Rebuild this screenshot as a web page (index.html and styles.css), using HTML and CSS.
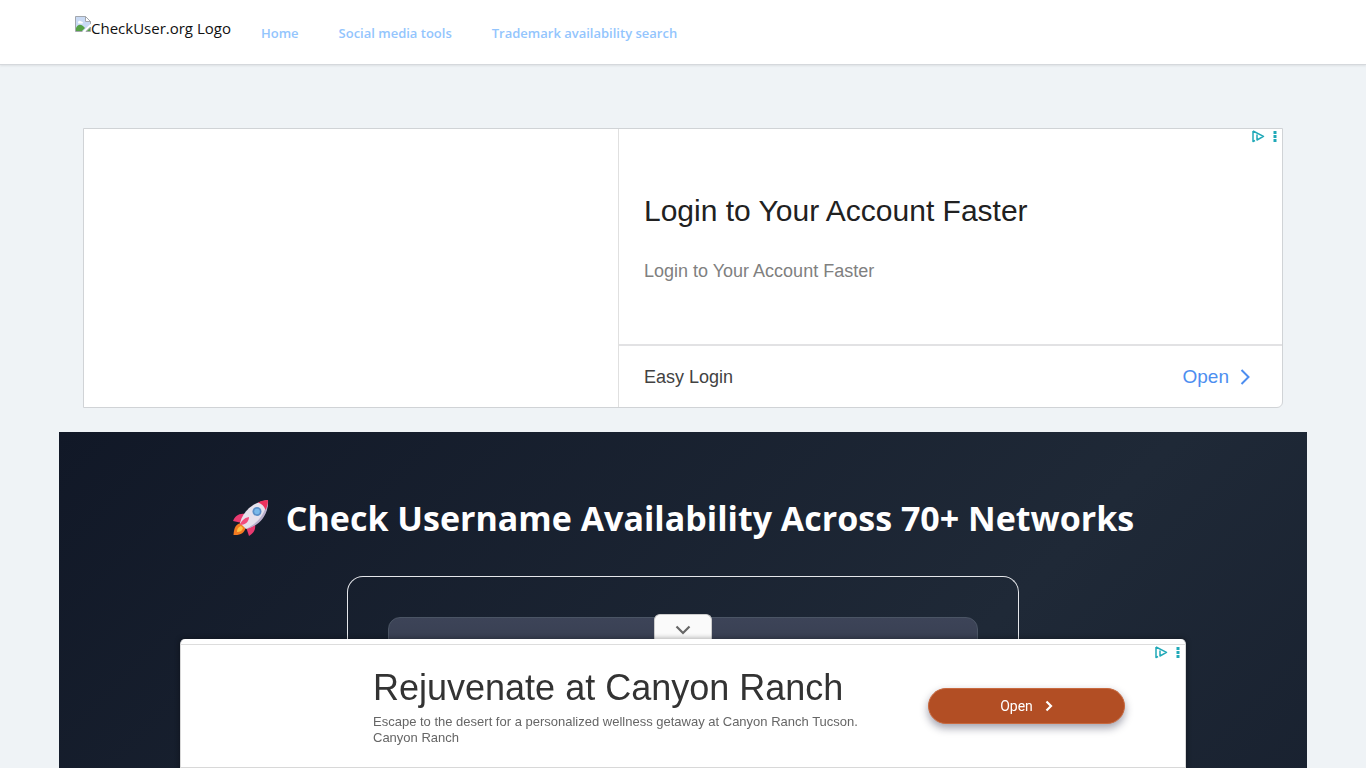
FILE: index.html
```html
<!DOCTYPE html>
<html lang="en">
<head>
<meta charset="utf-8">
<title>CheckUser.org</title>
<link rel="stylesheet" href="styles.css">
</head>
<body>
<header class="site-header">
  <div class="header-inner">
    <a class="logo" href="#">
      <svg width="16" height="16" viewBox="0 0 16 16" aria-hidden="true">
        <path d="M.5.5h10l5 5v4l-6 6h-9z" fill="#c9daf4" stroke="#a3a7ad"/>
        <path d="M10.500.5v5h5z" fill="#fff" stroke="#a3a7ad"/>
        <path d="M3 6.500c0-2 2.500-2.500 3-1 1.500-.5 2.500 1 1.500 2H3.500z" fill="#fff"/>
        <path d="M1 15v-3c2-4 5-4 8-1l1 1-3 3z" fill="#55a245"/>
        <path d="M16 7.500v3L10.500 16H7z" fill="#fff"/>
        <path d="M15.500 11v4.500H11z" fill="#55a245" stroke="#a3a7ad"/>
      </svg><span>CheckUser.org Logo</span>
    </a>
    <nav class="nav">
      <a href="#">Home</a>
      <a href="#">Social media tools</a>
      <a href="#">Trademark availability search</a>
    </nav>
  </div>
</header>

<main class="page">
  <section class="ad" aria-label="Advertisement">
    <div class="ad-media"></div>
    <div class="ad-body">
      <div class="ad-copy">
        <h2 class="ad-title">Login to Your Account Faster</h2>
        <p class="ad-text">Login to Your Account Faster</p>
      </div>
      <div class="ad-footer">
        <span>Easy Login</span>
        <a class="ad-open" href="#">Open
          <svg width="10" height="16" viewBox="0 0 10 16" aria-hidden="true"><path d="M1.500 1l7 7-7 7" fill="none" stroke="#4d8ef0" stroke-width="2"/></svg>
        </a>
      </div>
    </div>
    <div class="ad-choices">
      <svg width="28" height="14" viewBox="0 0 28 14" aria-hidden="true">
        <path d="M2 2v10.500l2-1M2 2l10.500 5.300L6 11V5.500" fill="none" stroke="#20a9b8" stroke-width="1.500" stroke-linejoin="round"/>
        <path d="M22.500 2h3v3h-3zM22.500 6h3v3h-3zM22.500 10h3v3h-3z" fill="#20a9b8"/>
      </svg>
    </div>
  </section>

  <section class="hero">
    <h1 class="hero-title">
      <svg width="38" height="38" viewBox="0 0 38 38" aria-hidden="true">
        <path d="M9 24c-5 1-7 4-7.500 12 7 .5 11-2 12-7z" fill="#f47b20"/>
        <path d="M9 27c-3 1-4 3-4 6 3 0 5-1 6-4z" fill="#ffc444"/>
        <path d="M13 15C7 14 3 17 1 22l9 2zM23 25c1 5-1 9-6 12l-3-9z" fill="#e83a70"/>
        <path d="M8 24C11 12 21 3 36 1c0 14-9 25-22 29z" fill="#e6e1ec"/>
        <path d="M14 30C26 24 33 15 36 1c1 14-8 26-22 29z" fill="#b9afcb"/>
        <path d="M26 3.500C29 2 32 1.200 36 1c0 4-1 7-2.500 10C32 7 30 5 26 3.500z" fill="#ed315d"/>
        <circle cx="25" cy="12.500" r="4.500" fill="#5a8fc8"/>
        <circle cx="25" cy="12.500" r="2.800" fill="#79b9ea"/>
        <path d="M17 18c-5 1-8 4-9 8 5 0 9-3 9-8z" fill="#f34a7b"/>
      </svg>
      <span>Check Username Availability Across 70+ Networks</span>
    </h1>
    <form class="search-card">
      <input class="search-input" type="text" aria-label="Username">
    </form>
  </section>
</main>

<aside class="anchor-ad" aria-label="Advertisement">
  <button class="collapse" type="button" aria-label="Collapse">
    <svg width="16" height="10" viewBox="0 0 16 10" aria-hidden="true"><path d="M1.500 1.500L8 8l6.500-6.500" fill="none" stroke="#666" stroke-width="2.200"/></svg>
  </button>
  <div class="anchor-body">
    <div class="anchor-copy">
      <h2 class="anchor-title">Rejuvenate at Canyon Ranch</h2>
      <p class="anchor-text">Escape to the desert for a personalized wellness getaway at Canyon Ranch Tucson.<br>Canyon Ranch</p>
    </div>
    <button class="anchor-open" type="button">Open
      <svg width="8" height="12" viewBox="0 0 8 12" aria-hidden="true"><path d="M1.500 1.500L6 6l-4.500 4.500" fill="none" stroke="#fff" stroke-width="2.200"/></svg>
    </button>
    <div class="ad-choices">
      <svg width="28" height="14" viewBox="0 0 28 14" aria-hidden="true">
        <path d="M2 2v10.500l2-1M2 2l10.500 5.300L6 11V5.500" fill="none" stroke="#20a9b8" stroke-width="1.500" stroke-linejoin="round"/>
        <path d="M22.500 2h3v3h-3zM22.500 6h3v3h-3zM22.500 10h3v3h-3z" fill="#20a9b8"/>
      </svg>
    </div>
  </div>
</aside>
</body>
</html>
```
FILE: styles.css
```css
* { box-sizing: border-box; }

body {
  margin: 0;
  min-height: 100vh;
  display: flex;
  flex-direction: column;
  background: #eff3f6;
  font-family: "Open Sans", "Noto Sans", sans-serif;
}

h1, h2, p { margin: 0; }
a { text-decoration: none; }
svg { display: block; flex: none; }

.site-header {
  background: #fff;
  border-bottom: 1px solid #d5d8dc;
  box-shadow: 0 1px 2px rgba(0, 0, 0, 0.08);
}

.header-inner {
  width: 100%;
  max-width: 1248px;
  min-height: 64px;
  margin: 0 auto;
  padding: 16px;
  display: flex;
  align-items: flex-start;
  gap: 30px;
}

.logo {
  display: flex;
  color: #111;
  font-size: 15px;
  line-height: 24px;
}

.nav {
  display: flex;
  gap: 40px;
  padding-top: 7px;
  font-size: 13px;
  font-weight: 600;
  line-height: 20px;
}

.nav a { color: #93c5fd; }

.page {
  flex: 1;
  width: 100%;
  max-width: 1248px;
  margin: 0 auto;
  padding-top: 63px;
  display: flex;
  flex-direction: column;
  gap: 24px;
}

.ad {
  position: relative;
  margin: 0 24px;
  min-height: 280px;
  display: grid;
  grid-template-columns: 534fr 664fr;
  background: #fff;
  border: 1px solid #d0d3d6;
  border-bottom-right-radius: 6px;
  font-family: "Liberation Sans", Arial, sans-serif;
}

.ad-body {
  display: flex;
  flex-direction: column;
  border-left: 1px solid #e0e0e0;
}

.ad-copy {
  flex: 1;
  padding: 0 25px;
  display: flex;
  flex-direction: column;
  justify-content: center;
  gap: 32px;
}

.ad-title {
  font-size: 30px;
  font-weight: 400;
  line-height: 36px;
  color: #212121;
}

.ad-text {
  font-size: 18px;
  line-height: 20px;
  color: #808080;
}

.ad-footer {
  min-height: 63px;
  padding: 0 32px 0 25px;
  border-top: 2px solid #e2e2e4;
  display: flex;
  align-items: center;
  justify-content: space-between;
  font-size: 18px;
  line-height: 20px;
  color: #424242;
}

.ad-open {
  display: flex;
  align-items: center;
  gap: 11px;
  font-size: 19px;
  color: #4d8ef0;
}

.ad-choices {
  position: absolute;
  top: 0;
  right: 3px;
}

.hero {
  flex: 1;
  padding: 64px 24px 0;
  display: flex;
  flex-direction: column;
  align-items: center;
  gap: 36px;
  background: linear-gradient(135deg, #111827, #1f2937 50%, #111827) top / 100% 1000px no-repeat #111827;
}

.hero-title {
  display: flex;
  align-items: center;
  gap: 16px;
  font-size: 34px;
  font-weight: 700;
  line-height: 44px;
  color: #fff;
}

.search-card {
  flex: 1;
  width: 100%;
  max-width: 672px;
  padding: 40px;
  border: 1px solid #e5e7eb;
  border-bottom: 0;
  border-radius: 16px 16px 0 0;
}

.search-input {
  width: 100%;
  height: 60px;
  padding: 0 24px;
  border: 1px solid #4b5565;
  border-radius: 12px;
  background: linear-gradient(#3d4458, #323a4a);
  color: #fff;
  font: inherit;
}

.anchor-ad {
  position: fixed;
  bottom: 0;
  left: 0;
  right: 0;
  width: calc(100% - 32px);
  max-width: 1006px;
  margin: 0 auto;
  display: flex;
  flex-direction: column;
  align-items: center;
}

.collapse {
  width: 58px;
  height: 25px;
  padding: 5px 0 0;
  display: flex;
  align-items: center;
  justify-content: center;
  border: 1px solid #ccc;
  border-bottom: 0;
  border-radius: 6px 6px 0 0;
  background: #fafafa;
}

.anchor-body {
  position: relative;
  width: 100%;
  min-height: 129px;
  padding: 6px 60px 0 192px;
  display: flex;
  align-items: center;
  justify-content: space-between;
  gap: 24px;
  background: linear-gradient(#fff 5px, #ddd 5px, #ddd 6px, #fff 6px);
  border: 1px solid #d8d8d8;
  border-top: 0;
  border-radius: 5px 5px 0 0;
  box-shadow: 0 0 5px 1px rgba(0, 0, 0, 0.3);
  font-family: "Liberation Sans", Arial, sans-serif;
}

.anchor-body .ad-choices {
  top: 6px;
}

.anchor-title {
  font-size: 36px;
  font-weight: 400;
  line-height: 44px;
  color: #333;
}

.anchor-text {
  padding-top: 4px;
  font-size: 13px;
  line-height: 16px;
  color: #666;
}

.anchor-open {
  width: 197px;
  height: 36px;
  display: flex;
  align-items: center;
  justify-content: center;
  gap: 12px;
  border: 1px solid #c8693f;
  border-radius: 18px;
  background: #b24e24;
  box-shadow: 0 4px 8px rgba(20, 20, 50, 0.4);
  color: #fff;
  font-family: Roboto, sans-serif;
  font-size: 14px;
}
```
